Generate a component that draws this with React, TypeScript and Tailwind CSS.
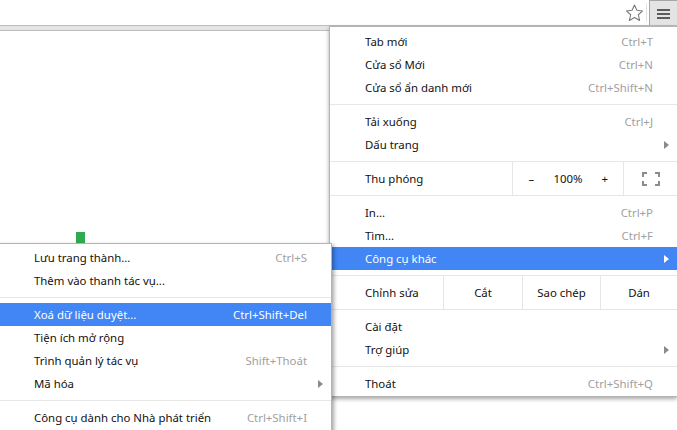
import React from "react";

type Item = { label: string; shortcut?: string; arrow?: boolean; active?: boolean };

function Arrow({ white }: { white?: boolean }) {
  return (
    <svg width="5" height="8" viewBox="0 0 5 8">
      <path d="M0 0 L5 4 L0 8 Z" fill={white ? "#ffffff" : "#8a8a8a"} />
    </svg>
  );
}

function Row({ item }: { item: Item }) {
  return (
    <div
      className={
        "flex h-[23px] items-center pl-[35px] pr-[8px] " +
        (item.active ? "bg-[#4285f4] text-white" : "text-[#111]")
      }
    >
      <span className="flex-1 whitespace-nowrap pt-px">{item.label}</span>
      {item.shortcut && (
        <span className={"whitespace-nowrap pt-px " + (item.active ? "text-white" : "text-[#a0a0a0]")}>
          {item.shortcut}
        </span>
      )}
      <span className="flex w-[16px] justify-end">{item.arrow && <Arrow white={item.active} />}</span>
    </div>
  );
}

function Sep() {
  return <div className="my-[5px] h-px bg-[#e6e6e6]" />;
}

function FullscreenIcon() {
  return (
    <svg width="18" height="14" viewBox="0 0 18 14" fill="none" stroke="#8c8c8c" strokeWidth="2">
      <path d="M1 5V1h4M13 1h4v4M17 9v4h-4M5 13H1V9" />
    </svg>
  );
}

export default function App() {
  return (
    <div className="relative h-[430px] w-[677px] overflow-hidden bg-white font-['Noto_Sans','Open_Sans',sans-serif] text-[11.4px]">
      {/* toolbar */}
      <div className="flex h-[25px] items-stretch justify-end">
        <div className="flex w-[24px] items-center justify-center">
          <svg width="21" height="20" viewBox="0 0 24 24" fill="none" stroke="#7a7a7a" strokeWidth="1.3" strokeLinejoin="round">
            <path d="M12 2.5l2.9 6.3 6.8.7-5.1 4.6 1.5 6.8L12 17.4l-6.1 3.5 1.5-6.8-5.1-4.6 6.8-.7z" />
          </svg>
        </div>
        <div className="my-[3px] w-px bg-[#e2e2e2]" />
        <div className="ml-[2px] flex w-[28px] flex-col items-center justify-center gap-[2px] border-l border-t border-[#a6a6a6] bg-[#e4e4e4] pt-px">
          <div className="h-[2px] w-[13px] bg-[#5c5c5c]" />
          <div className="h-[2px] w-[13px] bg-[#5c5c5c]" />
          <div className="h-[2px] w-[13px] bg-[#5c5c5c]" />
        </div>
      </div>
      <div className="h-[6px] border-y border-[#bdbdbd] bg-[#e5e5e5]" />

      {/* page content */}
      <div className="ml-[76px] mt-[201px] h-[14px] w-[9px] bg-[#2faa4f]" />

      {/* main menu */}
      <div className="absolute left-[329px] top-[26px] w-[348px] border-y border-l border-[#b4b4b4] bg-white pt-[3px] shadow-[0_2px_4px_rgba(0,0,0,0.35)]">
        <Row item={{ label: "Tab mới", shortcut: "Ctrl+T" }} />
        <Row item={{ label: "Cửa sổ Mới", shortcut: "Ctrl+N" }} />
        <Row item={{ label: "Cửa sổ ẩn danh mới", shortcut: "Ctrl+Shift+N" }} />
        <Sep />
        <Row item={{ label: "Tải xuống", shortcut: "Ctrl+J" }} />
        <Row item={{ label: "Dấu trang", arrow: true }} />
        <div className="mt-[5px] flex h-[35px] border-y border-[#e6e6e6] text-[#111]">
          <div className="flex flex-1 items-center pl-[35px] pt-px">Thu phóng</div>
          <div className="grid w-[111px] grid-cols-3 border-l border-[#e6e6e6]">
            <div className="flex items-center justify-center">–</div>
            <div className="flex items-center justify-center">100%</div>
            <div className="flex items-center justify-center">+</div>
          </div>
          <div className="flex w-[54px] items-center justify-center border-l border-[#e6e6e6]">
            <FullscreenIcon />
          </div>
        </div>
        <div className="mt-[5px]" />
        <Row item={{ label: "In...", shortcut: "Ctrl+P" }} />
        <Row item={{ label: "Tìm...", shortcut: "Ctrl+F" }} />
        <Row item={{ label: "Công cụ khác", arrow: true, active: true }} />
        <div className="mt-[5px] flex h-[35px] border-y border-[#e6e6e6] text-[#111]">
          <div className="flex flex-1 items-center pl-[35px] pt-px">Chỉnh sửa</div>
          <div className="flex w-[79px] items-center justify-center border-l border-[#e6e6e6]">Cắt</div>
          <div className="flex w-[78px] items-center justify-center border-l border-[#e6e6e6]">Sao chép</div>
          <div className="flex w-[77px] items-center justify-center border-l border-[#e6e6e6]">Dán</div>
        </div>
        <div className="mt-[5px]" />
        <Row item={{ label: "Cài đặt" }} />
        <Row item={{ label: "Trợ giúp", arrow: true }} />
        <Sep />
        <Row item={{ label: "Thoát", shortcut: "Ctrl+Shift+Q" }} />
        <div className="h-[1px]" />
      </div>

      {/* submenu */}
      <div className="absolute left-[-2px] top-[243px] w-[334px] border border-[#b4b4b4] bg-white pt-[2px] shadow-[2px_2px_4px_rgba(0,0,0,0.35)]">
        <Row item={{ label: "Lưu trang thành...", shortcut: "Ctrl+S" }} />
        <Row item={{ label: "Thêm vào thanh tác vụ..." }} />
        <Sep />
        <Row item={{ label: "Xoá dữ liệu duyệt...", shortcut: "Ctrl+Shift+Del", active: true }} />
        <Row item={{ label: "Tiện ích mở rộng" }} />
        <Row item={{ label: "Trình quản lý tác vụ", shortcut: "Shift+Thoát" }} />
        <Row item={{ label: "Mã hóa", arrow: true }} />
        <Sep />
        <Row item={{ label: "Công cụ dành cho Nhà phát triển", shortcut: "Ctrl+Shift+I" }} />
        <div className="h-[20px]" />
      </div>
    </div>
  );
}
